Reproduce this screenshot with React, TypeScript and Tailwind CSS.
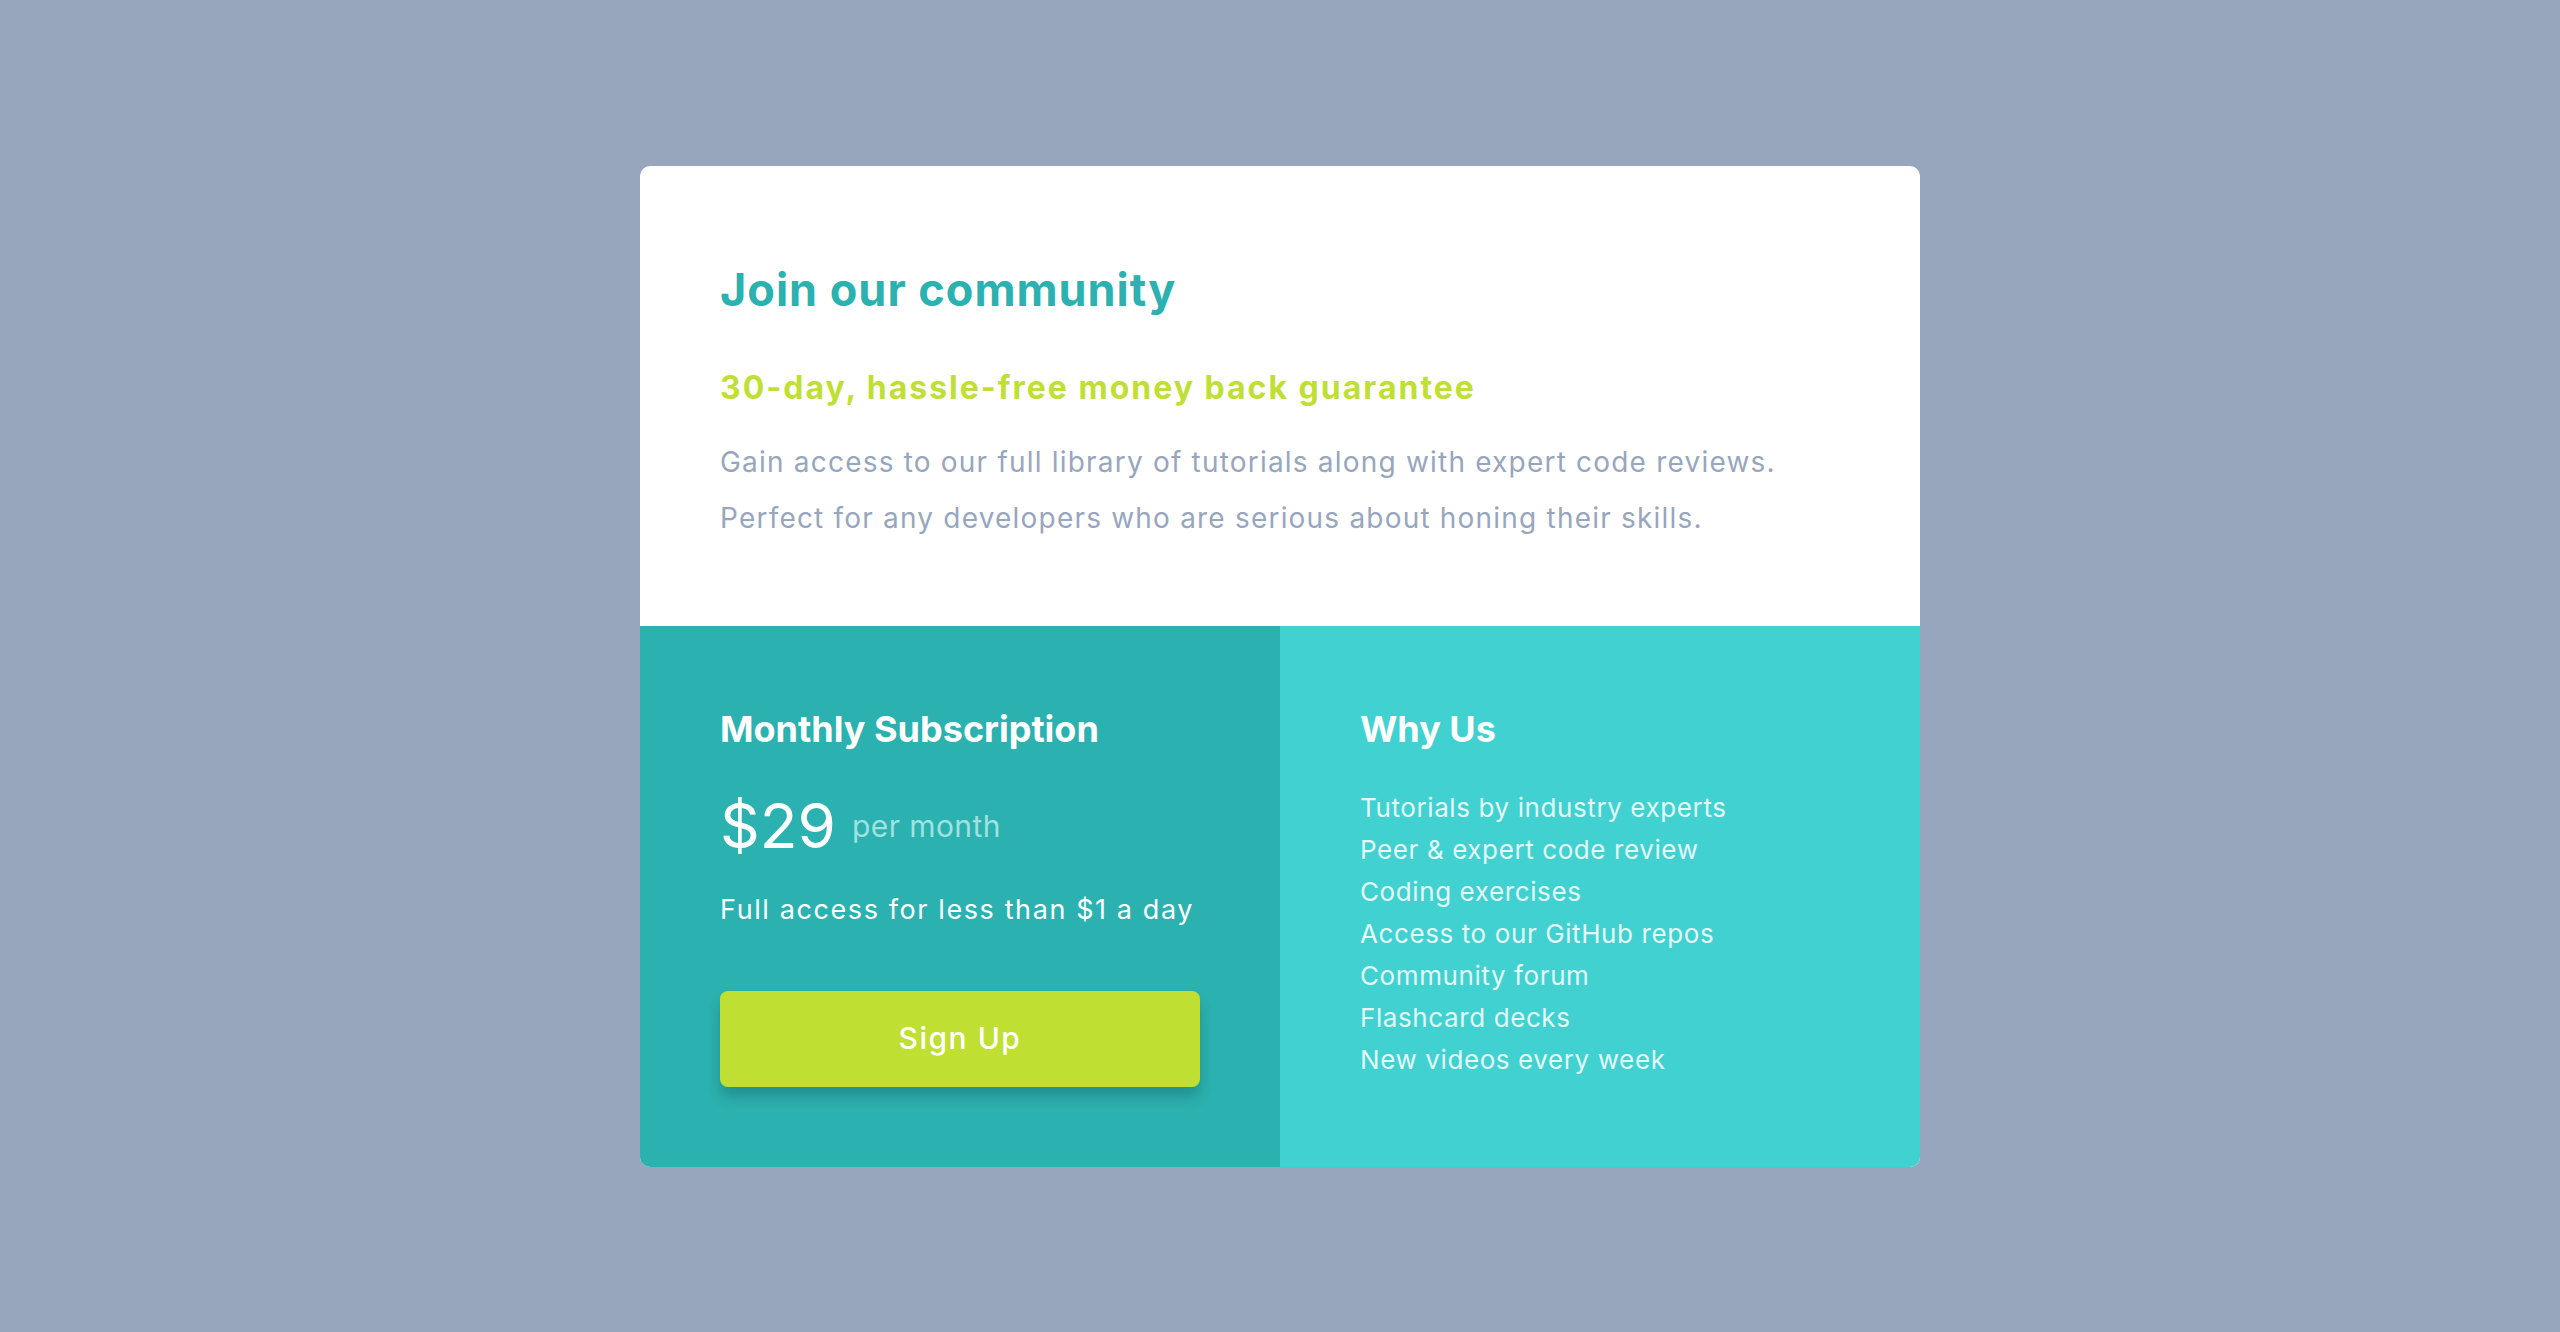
import React from "react";

const features = [
  "Tutorials by industry experts",
  "Peer & expert code review",
  "Coding exercises",
  "Access to our GitHub repos",
  "Community forum",
  "Flashcard decks",
  "New videos every week",
];

export default function App() {
  return (
    <div
      className="min-h-screen w-full bg-[#98a6bd] flex items-center justify-center"
      style={{ fontFamily: "Inter, 'Noto Sans', sans-serif" }}
    >
      <div className="w-[1280px] rounded-[10px] overflow-hidden bg-white">
        <section className="px-20 pt-[101px] pb-[80px]">
          <h1 className="text-[45px] leading-[45px] font-bold tracking-[1px] text-[#2bb1af]">
            Join our community
          </h1>
          <h2 className="mt-[60px] text-[32px] leading-[32px] font-bold tracking-[2px] text-[#c0df34]">
            30-day, hassle-free money back guarantee
          </h2>
          <p className="mt-[30px] text-[28px] leading-[56px] tracking-[1.2px] text-[#98a6bd] w-[1120px]">
            Gain access to our full library of tutorials along with expert code reviews.
            <br />
            Perfect for any developers who are serious about honing their skills.
          </p>
        </section>
        <div className="grid grid-cols-2">
          <section className="bg-[#2bb1af] px-20 pt-[85px] pb-[80px] text-white">
            <h3 className="text-[36px] leading-[36px] font-bold">Monthly Subscription</h3>
            <div className="mt-[48px] flex items-center gap-[16px]">
              <span className="text-[62px] leading-[62px]">$29</span>
              <span className="text-[30px] leading-[30px] tracking-[0.4px] text-[#9fe2e0]">per month</span>
            </div>
            <p className="mt-[39px] text-[27px] leading-[27px] tracking-[1.6px]">
              Full access for less than $1 a day
            </p>
            <button className="mt-[68px] w-[480px] h-[96px] rounded-[8px] bg-[#bfe033] text-white text-[30px] font-medium tracking-[1.5px] shadow-[0_10px_14px_rgba(0,0,0,0.18)]">
              Sign Up
            </button>
          </section>
          <section className="bg-[#40d1d0] px-20 pt-[85px] pb-[80px] text-white">
            <h3 className="text-[36px] leading-[36px] font-bold">Why Us</h3>
            <ul className="mt-[40px]">
              {features.map((f) => (
                <li key={f} className="text-[26px] leading-[42px] tracking-[0.6px] text-[#e3f8f7]">
                  {f}
                </li>
              ))}
            </ul>
          </section>
        </div>
      </div>
    </div>
  );
}
